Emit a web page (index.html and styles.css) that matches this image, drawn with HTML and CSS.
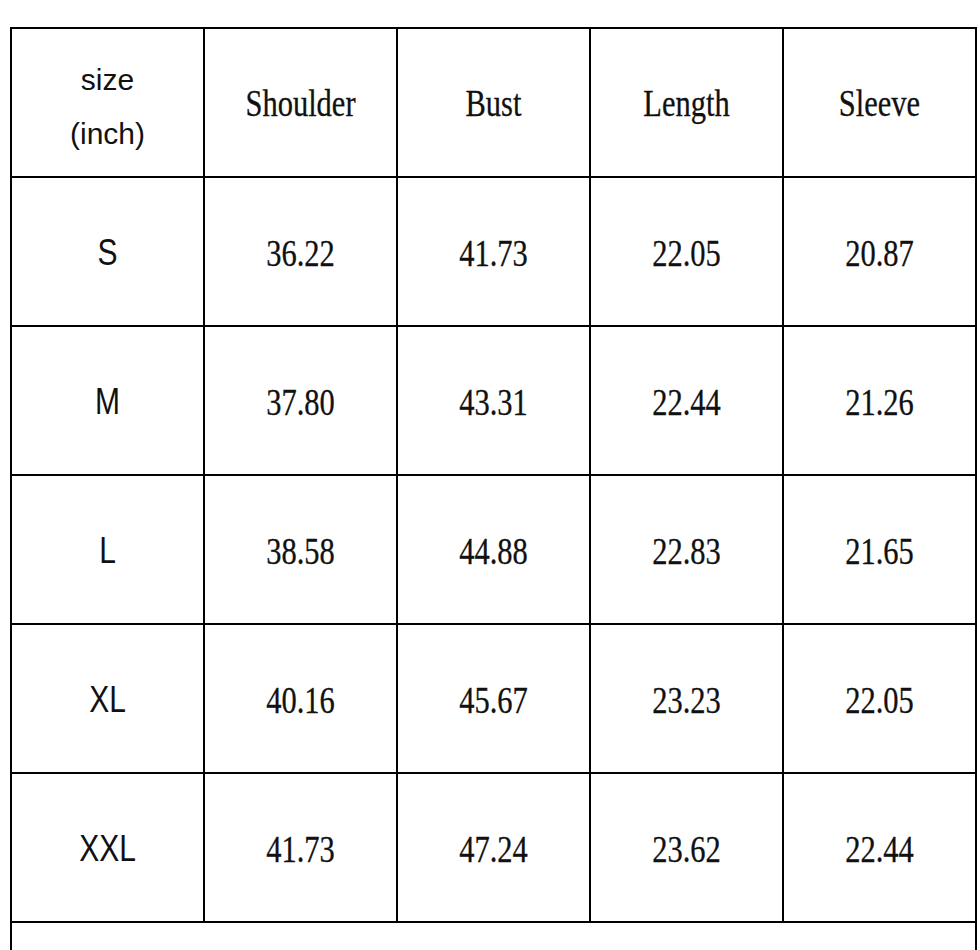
FILE: index.html
```html
<!DOCTYPE html>
<html lang="en">
<head>
<meta charset="utf-8">
<title>Size chart</title>
<link rel="stylesheet" href="styles.css">
</head>
<body>
<div class="sheet">
  <div class="cell head-size"><span class="line">size</span><span class="line">(inch)</span></div>
  <div class="cell serif head"><span class="txt">Shoulder</span></div>
  <div class="cell serif head"><span class="txt">Bust</span></div>
  <div class="cell serif head"><span class="txt">Length</span></div>
  <div class="cell serif head"><span class="txt">Sleeve</span></div>

  <div class="cell sans"><span class="txt">S</span></div>
  <div class="cell serif"><span class="txt">36.22</span></div>
  <div class="cell serif"><span class="txt">41.73</span></div>
  <div class="cell serif"><span class="txt">22.05</span></div>
  <div class="cell serif"><span class="txt">20.87</span></div>

  <div class="cell sans"><span class="txt">M</span></div>
  <div class="cell serif"><span class="txt">37.80</span></div>
  <div class="cell serif"><span class="txt">43.31</span></div>
  <div class="cell serif"><span class="txt">22.44</span></div>
  <div class="cell serif"><span class="txt">21.26</span></div>

  <div class="cell sans"><span class="txt">L</span></div>
  <div class="cell serif"><span class="txt">38.58</span></div>
  <div class="cell serif"><span class="txt">44.88</span></div>
  <div class="cell serif"><span class="txt">22.83</span></div>
  <div class="cell serif"><span class="txt">21.65</span></div>

  <div class="cell sans"><span class="txt">XL</span></div>
  <div class="cell serif"><span class="txt">40.16</span></div>
  <div class="cell serif"><span class="txt">45.67</span></div>
  <div class="cell serif"><span class="txt">23.23</span></div>
  <div class="cell serif"><span class="txt">22.05</span></div>

  <div class="cell sans"><span class="txt">XXL</span></div>
  <div class="cell serif"><span class="txt">41.73</span></div>
  <div class="cell serif"><span class="txt">47.24</span></div>
  <div class="cell serif"><span class="txt">23.62</span></div>
  <div class="cell serif"><span class="txt">22.44</span></div>

  <div class="cell note"></div>
</div>
</body>
</html>
```

FILE: styles.css
```css
html, body {
  margin: 0;
  padding: 0;
  background: #ffffff;
}

body {
  color: #111111;
}

.sheet {
  margin: 27px 0 0 10px;
  width: 963px;
  padding: 2px 2px 0 2px;
  background: #000000;
  display: grid;
  grid-template-columns: repeat(5, 191px);
  grid-auto-rows: 147px;
  gap: 2px;
}

.cell {
  background: #ffffff;
  display: flex;
  align-items: center;
  justify-content: center;
  box-sizing: border-box;
}

.txt {
  display: inline-block;
  line-height: 1;
  transform-origin: center;
}

.serif {
  font-family: "Liberation Serif", "Times New Roman", serif;
  font-size: 30.5px;
  padding-top: 6px;
  -webkit-text-stroke: 0.25px #111111;
}

.serif .txt {
  transform: scaleY(1.23);
}

.serif.head {
  padding-top: 4px;
}

.sans {
  font-family: "Liberation Sans", Arial, sans-serif;
  font-size: 30px;
  padding-top: 2px;
}

.sans .txt {
  transform: scaleY(1.2);
}

.head-size {
  flex-direction: column;
  font-family: "Liberation Sans", Arial, sans-serif;
  font-size: 30px;
  line-height: 54px;
  padding-top: 8px;
}

.line {
  display: block;
}

.note {
  grid-column: 1 / -1;
  height: 60px;
}
```
